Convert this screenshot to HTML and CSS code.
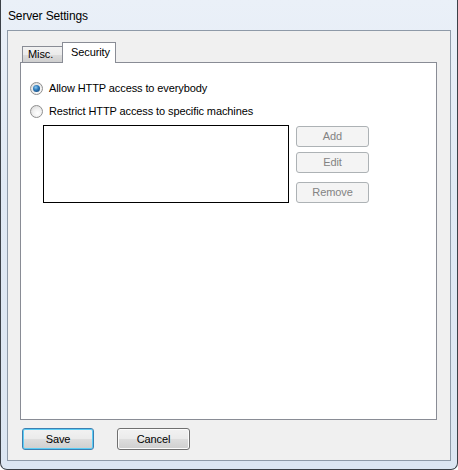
FILE: index.html
```html
<!DOCTYPE html>
<html>
<head>
<meta charset="utf-8">
<link rel="stylesheet" href="styles.css">
</head>
<body>
<div class="window">
  <div class="titlebar">Server Settings</div>
  <div class="client">
    <div class="tabs">
      <div class="tab">Misc.</div>
      <div class="tab selected">Security</div>
    </div>
    <div class="panel">
      <label class="radio-row">
        <span class="radio checked"><span class="dot"></span></span>
        <span>Allow HTTP access to everybody</span>
      </label>
      <label class="radio-row second">
        <span class="radio"></span>
        <span>Restrict HTTP access to specific machines</span>
      </label>
      <div class="list-row">
        <div class="listbox"></div>
        <div class="list-buttons">
          <button class="btn disabled">Add</button>
          <button class="btn disabled">Edit</button>
          <button class="btn disabled remove">Remove</button>
        </div>
      </div>
    </div>
    <div class="footer">
      <button class="btn push default">Save</button>
      <button class="btn push cancel">Cancel</button>
    </div>
  </div>
</div>
</body>
</html>
```

FILE: styles.css
```css
html, body {
  margin: 0;
  padding: 0;
  background: #ffffff;
}

body {
  width: 458px;
  height: 470px;
  overflow: hidden;
  font-family: "Liberation Sans", Arial, sans-serif;
  font-size: 11px;
  letter-spacing: -0.1px;
  color: #000;
}

.window {
  box-sizing: border-box;
  width: 458px;
  height: 470px;
  border: 1px solid #3c4148;
  border-top: none;
  border-radius: 0 0 7px 7px;
  background: linear-gradient(180deg, #eaf0f8 0%, #e0e9f4 40%, #dce6f2 100%);
  padding: 0 6px 8px 6px;
  display: flex;
  flex-direction: column;
}

.titlebar {
  height: 30px;
  padding-left: 1px;
  display: flex;
  align-items: center;
  font-size: 12px;
  letter-spacing: -0.15px;
  color: #000;
  line-height: 14px;
  padding-top: 1px;
  box-sizing: border-box;
}

.client {
  flex: 1;
  border: 1px solid #8e9aa8;
  background: #f0f0f0;
  padding: 11px 13px 0 12px;
  display: flex;
  flex-direction: column;
}

.tabs {
  display: flex;
  align-items: flex-end;
  height: 20px;
  padding-left: 2px;
}

.tab {
  box-sizing: border-box;
  height: 16px;
  width: 41px;
  border: 1px solid #898c95;
  border-bottom: none;
  background: linear-gradient(180deg, #f2f2f2 0%, #ebebeb 50%, #dddddd 51%, #cfcfcf 100%);
  padding-left: 5px;
  line-height: 15px;
  font-size: 11px;
}

.tab.selected {
  height: 21px;
  width: 54px;
  margin-left: -1px;
  margin-bottom: -1px;
  background: #ffffff;
  padding-left: 8px;
  line-height: 19px;
  position: relative;
  z-index: 1;
}

.panel {
  box-sizing: border-box;
  height: 358px;
  border: 1px solid #898c95;
  background: #ffffff;
  padding: 19px 0 0 9px;
  display: flex;
  flex-direction: column;
}

.radio-row {
  display: flex;
  align-items: center;
  height: 13px;
  line-height: 13px;
  gap: 6px;
}

.radio-row.second {
  margin-top: 10px;
}

.radio {
  box-sizing: border-box;
  width: 13px;
  height: 13px;
  border-radius: 50%;
  border: 1px solid #8f8f8f;
  background: radial-gradient(circle at 60% 65%, #ffffff 0%, #f0f0f0 45%, #d2d2d2 100%);
  display: flex;
  align-items: center;
  justify-content: center;
  flex: none;
}

.radio .dot {
  width: 7px;
  height: 7px;
  border-radius: 50%;
  background: radial-gradient(circle at 40% 35%, #8fc8ee 0%, #2f7dbd 40%, #0f3766 100%);
}

.list-row {
  display: flex;
  margin-top: 7px;
  margin-left: 13px;
  gap: 7px;
}

.listbox {
  box-sizing: border-box;
  width: 246px;
  height: 78px;
  border: 1px solid #000;
  background: #fff;
}

.list-buttons {
  display: flex;
  flex-direction: column;
  margin-top: 1px;
  gap: 5px;
}

.btn {
  box-sizing: border-box;
  width: 73px;
  height: 21px;
  border-radius: 3px;
  font-family: "Liberation Sans", Arial, sans-serif;
  font-size: 11px;
  letter-spacing: -0.1px;
  padding: 0;
  margin: 0;
  line-height: 19px;
  text-align: center;
}

.btn.disabled {
  border: 1px solid #adb2b5;
  background: #f4f4f4;
  color: #838383;
}

.btn.remove {
  margin-top: 4px;
}

.footer {
  display: flex;
  gap: 23px;
  margin-top: 8px;
  padding-left: 2px;
}

.btn.push {
  height: 22px;
  width: 73px;
  color: #000;
  border: 1px solid #707070;
  background: linear-gradient(180deg, #f2f2f2 0%, #ebebeb 48%, #dddddd 52%, #cfcfcf 100%);
  box-shadow: inset 0 0 0 1px #fcfcfc;
  line-height: 20px;
}

.btn.default {
  width: 72px;
  border-color: #3c7fb1;
  box-shadow: inset 0 0 0 1px #5ccdf5;
}
```
